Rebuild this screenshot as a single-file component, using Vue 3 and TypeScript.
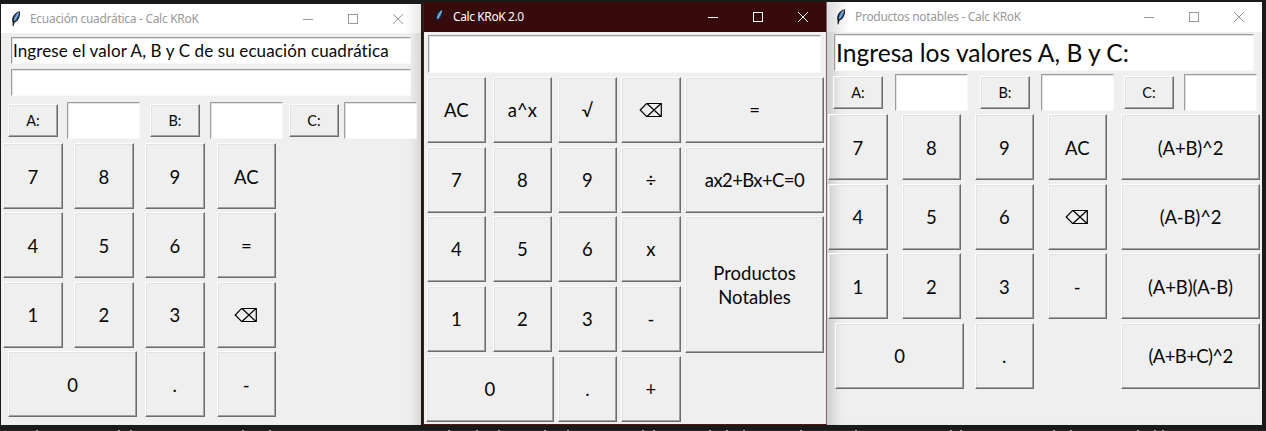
<script setup lang="ts">
interface Key { label: string; cls?: string }
interface Win {
  id: string
  title: string
  fields: string[]
  coef: boolean
  keys: Key[]
}

const k = (label: string, cls = ''): Key => ({ label, cls })

const windows: Win[] = [
  {
    id: 'quad',
    title: 'Ecuación cuadrática - Calc KRoK',
    fields: ['Ingrese el valor A, B y C de su ecuación cuadrática', ''],
    coef: true,
    keys: [
      k('7'), k('8'), k('9'), k('AC'),
      k('4'), k('5'), k('6'), k('='),
      k('1'), k('2'), k('3'), k('⌫'),
      k('0', 'zero'), k('.'), k('-'),
    ],
  },
  {
    id: 'main',
    title: 'Calc KRoK 2.0',
    fields: [''],
    coef: false,
    keys: [
      k('AC'), k('a^x'), k('√'), k('⌫'), k('=', 'wide'),
      k('7'), k('8'), k('9'), k('÷'), k('ax2+Bx+C=0', 'wide formula'),
      k('4'), k('5'), k('6'), k('x'), k('Productos\nNotables', 'wide tall'),
      k('1'), k('2'), k('3'), k('-'),
      k('0', 'zero'), k('.'), k('+'),
    ],
  },
  {
    id: 'prod',
    title: 'Productos notables - Calc KRoK',
    fields: ['Ingresa los valores A, B y C:'],
    coef: true,
    keys: [
      k('7'), k('8'), k('9'), k('AC'), k('(A+B)^2', 'wide'),
      k('4'), k('5'), k('6'), k('⌫'), k('(A-B)^2', 'wide'),
      k('1'), k('2'), k('3'), k('-'), k('(A+B)(A-B)', 'wide'),
      k('0', 'zero'), k('.'), k('(A+B+C)^2', 'wide last formula'),
    ],
  },
]

// Tips of the editor text that peeks out under the windows
const tips = [36, 118, 130, 242, 269, 448, 476, 498, 544, 567, 642, 653, 709, 726, 743, 800, 855, 950, 960, 1053, 1070, 1137, 1154, 1162]
</script>

<template>
  <div class="desk">
    <section v-for="w in windows" :key="w.id" class="win" :class="w.id">
      <header class="bar">
        <svg class="feather" width="12" height="18" viewBox="0 0 12 18">
          <path d="M2.6 12.6C1 8.5 4 2.2 9.8 1.2C10.7 5 9 10.8 4.6 12.6L3.4 16.4L2.6 16.2Z" fill="#15191f" />
          <path d="M4 10.6C3.2 7 5.8 3.2 9 2.2C9.2 5.4 7.6 9.6 4.6 11.4Z" fill="#3f78b8" />
          <path d="M8.6 2.6L4.2 10.6" stroke="#a9cdf0" stroke-width="0.9" />
        </svg>
        <span class="title">{{ w.title }}</span>
        <svg class="ctl" width="102" height="12" viewBox="0 0 102 12" fill="none" stroke="currentColor">
          <path d="M1 6.5H11" />
          <rect x="46.5" y="1.5" width="9" height="9" />
          <path d="M91 1L101 11M101 1L91 11" />
        </svg>
      </header>
      <div class="fields">
        <div v-for="(f, i) in w.fields" :key="i" class="entry"><span>{{ f }}</span></div>
      </div>
      <div v-if="w.coef" class="coef">
        <template v-for="c in ['A:', 'B:', 'C:']" :key="c">
          <button class="btn small">{{ c }}</button>
          <div class="entry"></div>
        </template>
      </div>
      <div class="keys">
        <button v-for="(b, i) in w.keys" :key="i" class="btn" :class="b.cls">
          <svg v-if="b.label === '⌫'" class="erase" width="24" height="16" viewBox="0 0 24 16" fill="none" stroke="#000" stroke-width="1.2" role="img" aria-label="⌫">
            <path d="M7.5 1.5H22.3V14.5H7.5L1.2 8ZM8 1.5L22 14.5M22 1.5L8 14.5" />
          </svg>
          <span v-else>{{ b.label }}</span>
        </button>
      </div>
    </section>
    <svg class="tips" width="1266" height="1" viewBox="0 0 1266 1">
      <rect width="1266" height="1" fill="#2a2426" />
      <rect v-for="t in tips" :key="t" :x="t" y="0" width="2" height="1" fill="#b5b0b0" />
    </svg>
  </div>
</template>

<style>
html, body { margin: 0; background: #191919; overflow: hidden; }
</style>

<style scoped>
.desk {
  box-sizing: border-box;
  position: relative;
  width: 1266px;
  height: 431px;
  padding: 2px 0 0 1px;
  display: flex;
  align-items: flex-start;
  background: #191b1b;
  font-family: Lato, "Liberation Sans", sans-serif;
  font-variant-ligatures: none;
  color: #080808;
  overflow: hidden;
}
.tips { position: absolute; left: 0; bottom: 0; }
.win { box-sizing: border-box; background: #efefef; flex: none; overflow: hidden; }
.quad { width: 420px; height: 421px; margin: 2px 2px 0 0; box-shadow: inset -13px 0 10px -8px #d2d2d2; }
.main { width: 404px; height: 423px; border: 1px solid #501719; border-top: 0; border-right-color: #8a6464; }
.prod { width: 435px; height: 423px; box-shadow: inset 15px 0 12px -8px #cbcbcb; }

.bar { display: flex; align-items: center; height: 30px; box-sizing: border-box; color: #999; background: #fff; }
.main .bar { height: 30px; background: #370a0b; color: #fff; }
.quad .bar { height: 29px; padding-left: 9px; background: linear-gradient(90deg, #fff 96%, #e8e8e8); }
.main .bar { padding-left: 9px; }
.prod .bar { padding-left: 8px; background: linear-gradient(90deg, #dcdcdc, #fff 5%); }
.feather { flex: none; }
.title { font: 12px/16px "Noto Sans", "Open Sans", sans-serif; margin-left: 8px; white-space: pre; letter-spacing: -0.3px; }
.main .title { letter-spacing: -0.4px; }
.ctl { margin-left: auto; margin-right: 17px; flex: none; }

.entry {
  box-sizing: border-box;
  background: #fff;
  border: 1px solid;
  border-color: #9b9b9b #f8f8f8 #f8f8f8 #9b9b9b;
  box-shadow: inset 1px 1px #e3e3e3;
  white-space: pre;
  overflow: hidden;
}
.fields { display: flex; flex-direction: column; }
.quad .fields { padding: 4px 10px 0; gap: 5px; }
.quad .fields .entry { height: 27px; width: 400px; padding-left: 1px; font-size: 17px; line-height: 25px; letter-spacing: 0.11px; }
.main .fields { padding: 3px 4px 0; }
.main .fields .entry { height: 38px; width: 393px; }
.prod .fields { padding: 2px 7px 0; }
.prod .fields .entry { height: 37px; width: 420px; padding-left: 1px; font-size: 24.6px; line-height: 35px; }

.coef { display: grid; align-items: center; height: 37px; }
.coef .entry { width: 73px; height: 37px; }
.quad .coef { margin: 6px 0 0 7px; grid-template-columns: 59px 83px 60px 79px 55px 73px; }
.prod .coef { margin: 3px 0 0 6px; grid-template-columns: 62px 85px 61px 83px 60px 73px; }

.btn {
  box-sizing: border-box;
  display: flex;
  align-items: center;
  justify-content: center;
  width: 59.5px;
  height: 66px;
  margin: 0;
  padding: 0;
  font: 18.5px/24px Lato, "Liberation Sans", sans-serif;
  font-variant-ligatures: none;
  color: #080808;
  text-align: center;
  white-space: pre;
  background: transparent;
  border: 1px solid;
  border-color: #fdfdfd #6c6c6c #6c6c6c #fdfdfd;
  border-radius: 0;
  box-shadow: inset -1px -1px #a3a3a3, inset 1px 1px #e2e2e2;
}
.quad .keys .btn, .prod .keys .btn { padding-top: 1px; }
.btn.small { width: 50px; height: 33px; font-size: 14.5px; }
.btn.wide { width: 139px; letter-spacing: -0.15px; }
.btn.formula { letter-spacing: -0.6px; }
.btn.tall { height: 137px; grid-row: span 2; letter-spacing: 0; }
.btn.zero { width: 129px; grid-column: span 2; }
.btn.last { grid-column: 5; }

.keys { display: grid; align-items: start; }
.quad .keys { margin: 4px 0 0 2px; grid-template-columns: 71px 71px 71.5px 60px; grid-auto-rows: 69.4px; }
.quad .zero { margin-left: 5px; }
.main .keys { margin: 4px 0 0 2.6px; grid-template-columns: 66px 65px 63.5px 63.9px 139px; grid-auto-rows: 69.7px; }
.main .zero { margin-left: -1px; width: 128.5px; }
.prod .keys { margin: 3.4px 0 0 1px; grid-template-columns: 73.5px 73px 73px 73.5px 139px; grid-auto-rows: 69.4px; }
.prod .zero { margin-left: 7px; }
</style>
